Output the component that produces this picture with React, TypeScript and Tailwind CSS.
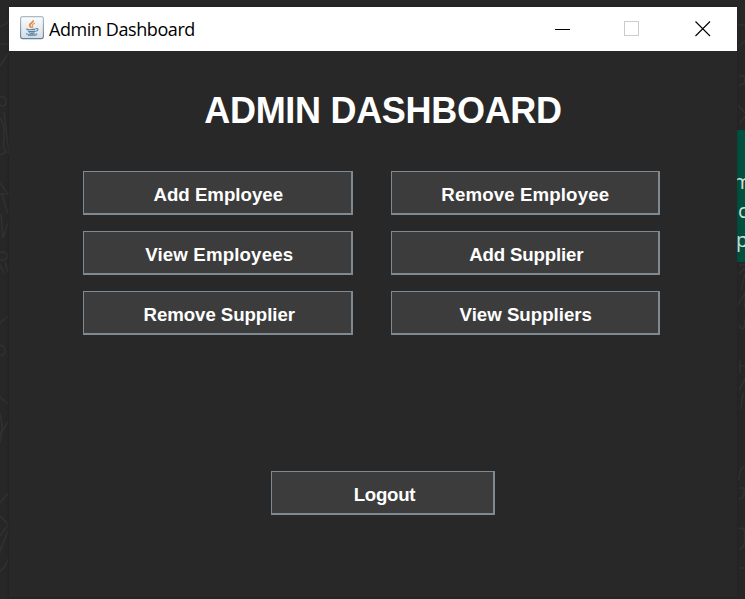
const actions = [
  { label: 'Add Employee', text: 'pl-[2px]' },
  { label: 'Remove Employee', text: 'pl-px tracking-[0.13px]' },
  { label: 'View Employees', text: 'pl-[4px] tracking-[0.15px]' },
  { label: 'Add Supplier', text: 'pl-[3px] tracking-[-0.17px]' },
  { label: 'Remove Supplier', text: 'pl-[4px] tracking-[-0.07px]' },
  { label: 'View Suppliers', text: 'pl-[2px]' },
];

function JavaIcon() {
  return (
    <svg width="24" height="24" viewBox="0 0 24 24" fill="none" className="shrink-0">
      <defs>
        <linearGradient id="tile" x1="0" y1="0" x2="0" y2="1">
          <stop offset="0" stopColor="#fbfcfd" />
          <stop offset="1" stopColor="#d3dde5" />
        </linearGradient>
        <linearGradient id="edge" x1="0" y1="0" x2="0" y2="1">
          <stop offset="0" stopColor="#a9bac8" />
          <stop offset="1" stopColor="#64809a" />
        </linearGradient>
      </defs>
      <rect x="0.6" y="0.6" width="22.8" height="22" rx="2" fill="url(#tile)" stroke="url(#edge)" strokeWidth="1.1" />
      <path d="M13.200 4.200c.8 2.400-4.600 3.300-3.400 5.600.3.8 1.300 1.300 1.600 2" stroke="#e58a3c" strokeWidth="1.7" />
      <path d="M15 7.200c-2 .8-3.300 1.600-2.500 2.800.5.8.4 1.200-.4 2" stroke="#e9a05f" strokeWidth="1.300" />
      <path d="M7.500 12.700c-2.200.8 1.500 1.200 4.400 1 1.600 0 3-.3 3.400-.6" stroke="#5882a1" strokeWidth="1.200" />
      <path d="M15.600 12.700c3.400-.8 3.200 2-.3 2.800" stroke="#5882a1" strokeWidth="1.100" />
      <path d="M8 14.700c.7 1.200 5.800 1.200 7.200.4M8.800 16.500c.8 1 4.500 1 5.800.3" stroke="#5882a1" strokeWidth="1.200" />
      <path d="M7.200 17.300c-5 1.300 8.300 1.900 9.800.3M8 19.500c4 .4 8 .1 9.400-1" stroke="#6c92ad" strokeWidth="1" />
    </svg>
  );
}

function Wallpaper() {
  return (
    <svg width="745" height="599" fill="none" stroke="#313131" strokeWidth="1.6" className="absolute inset-0">
      <path d="M0 26q6-1 9-6M0 44h9M0 66l9-13M0 97q7-1 6 5t-6 3M0 118q5 6 4 20t3 14l-7 3M4 112l5 42M0 183l8 11H0M2 194l6 20M1 214l2 24 5-15M0 252q7-1 7 4t-7 4M0 265l4 8M5 262l3 10M0 323l8-7M0 345q5 1 5 6t-5 4M0 397l8 7M0 414q4 13 0 28M0 434l8-12M0 503l8-10M0 516l8 8M0 536l8-11M0 551l8-20M0 571q6-4 8-12" />
      <path d="M738 25h7M738 47l7-6M739 76q6-1 6 4t-6 5M738 105l7 8M740 123l5-7M739 265h6M739 274l6-6M741 290l4-16M738 305l7-12v16M739 325q5 10 6-6M738 366h7M740 360v13M739 390l6-11M741 409l2-16M739 480q1-14 6-13M739 488h6M739 499q6 0 5-10M739 529q6-4 6 8t-6 12M739 568h6" />
    </svg>
  );
}

function ActionButton({ label, text }: { label: string; text: string }) {
  return (
    <button
      type="button"
      className="h-[44px] w-full border-t border-r-2 border-b-2 border-l border-[#7f8991] bg-[#3c3c3c] pt-[5px] text-[18.67px] leading-[22px] font-bold whitespace-nowrap text-white"
    >
      <span className={text}>{label}</span>
    </button>
  );
}

export default function App() {
  return (
    <div className="relative h-[599px] w-[745px] overflow-hidden bg-[#272727] font-['Liberation_Sans',Arial,sans-serif]">
      <Wallpaper />
      <div className="absolute top-[130px] left-[737px] h-[132px] w-[60px] bg-[#00513f] pt-[37px] font-['Open_Sans',sans-serif] text-[20px] leading-[29px] text-[#d3e2de]">
        <div className="-ml-[4px]">m</div>
        <div className="ml-[1px]">c</div>
        <div className="-ml-px">p</div>
      </div>
      <main className="absolute top-[7px] left-[9px] flex h-[590px] w-[728px] flex-col bg-[#282828] shadow-[0_0_4px_rgba(0,0,0,0.2)]">
        <header className="flex h-[44px] shrink-0 items-center bg-white pr-[26px] pl-[11px]">
          <div className="flex items-center pb-[3px]">
            <JavaIcon />
            <span className="pt-[3px] pl-[5px] font-['Open_Sans',sans-serif] text-[18px] leading-6 tracking-[-0.42px] text-black">
              Admin Dashboard
            </span>
          </div>
          <div className="mb-px ml-auto flex items-center gap-[53px]">
            <svg width="16" height="16" shapeRendering="crispEdges">
              <path d="M0 8.500h15" stroke="#000" />
            </svg>
            <svg width="16" height="16" shapeRendering="crispEdges" fill="none">
              <path d="M.5.5h14v14H.5z" stroke="#cccccc" />
            </svg>
            <svg width="16" height="16" className="ml-[2px]">
              <path d="M.5.5l14.500 14.500M15 .5l-14.500 14.500" stroke="#000" strokeWidth="1.100" />
            </svg>
          </div>
        </header>
        <h1 className="mt-[39px] ml-[20px] h-[42px] text-center text-[36px] leading-[42px] font-bold tracking-[-0.3px] whitespace-nowrap text-white">
          ADMIN DASHBOARD
        </h1>
        <div className="mt-[39px] grid grid-cols-2 gap-x-[38px] gap-y-4 pr-[77px] pl-[74px]">
          {actions.map((action) => (
            <ActionButton key={action.label} {...action} />
          ))}
        </div>
        <div className="mt-[136px] ml-[262px] w-[224px]">
          <ActionButton label="Logout" text="pl-[4px] tracking-[-0.25px]" />
        </div>
      </main>
    </div>
  );
}
